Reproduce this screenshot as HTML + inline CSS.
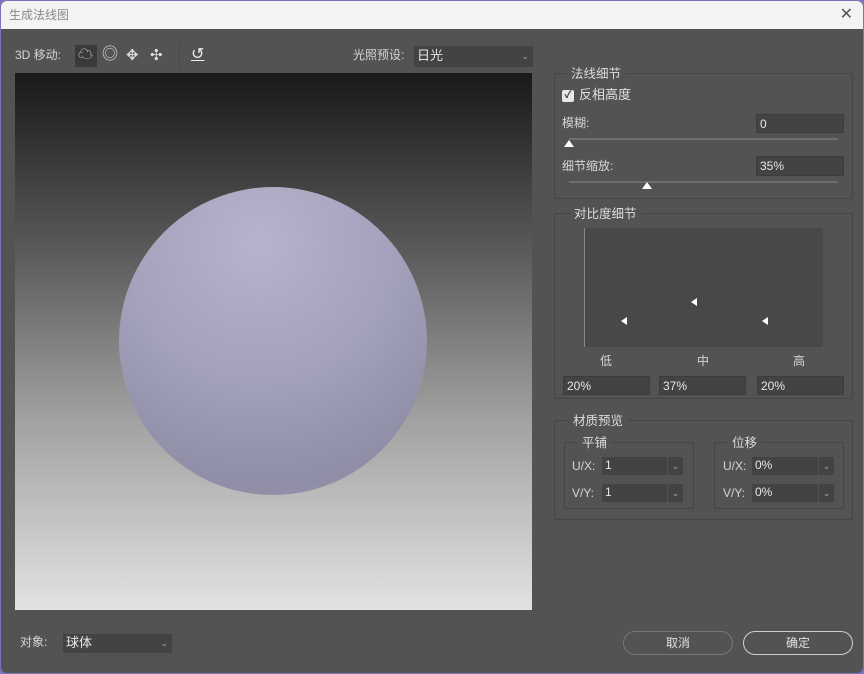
<!DOCTYPE html>
<html><head><meta charset="utf-8"><style>
*{box-sizing:border-box;margin:0;padding:0}
body{width:864px;height:674px;background:#7a74b8;font-family:"Liberation Sans","Noto Sans CJK SC",sans-serif;overflow:hidden;position:relative}
.win{position:absolute;left:1px;top:1px;width:862px;height:672px;background:#535353;border-radius:6px;overflow:hidden}
.title{position:absolute;left:0;top:0;width:862px;height:28px;background:#f3f3f3;color:#888;font-size:12px;line-height:28px;padding-left:8px}
.x{position:absolute;right:10px;top:0;font-size:16px;color:#555}
.t{position:absolute;color:#d6d6d6;font-size:12px;white-space:nowrap;line-height:14px}
.in{position:absolute;background:#434343;border:1px solid #3c3c3c;color:#e6e6e6;font-size:12px;line-height:18px;padding-left:3px}
.box{position:absolute;border:1px solid #454545;border-radius:2px}
.lg{position:absolute;background:#535353;color:#dcdcdc;font-size:12.5px;padding:0 4px;line-height:15px}
.sl{position:absolute;height:2px;background:#6e6e6e}
.th{position:absolute;width:0;height:0;border-left:5px solid transparent;border-right:5px solid transparent;border-bottom:7px solid #fff}
.dd{position:absolute;right:0;top:0;width:16px;height:100%;border-left:1px solid #535353;color:#aaa;font-size:9px;text-align:center;line-height:18px}
.btn{position:absolute;top:630px;width:110px;height:24px;border-radius:12px;color:#e0e0e0;font-size:12px;text-align:center;line-height:22px}
.tri{position:absolute;width:0;height:0;border-top:4px solid transparent;border-bottom:4px solid transparent;border-right:6px solid #fff}
</style></head><body><div class="win">
<div class="title">生成法线图<span class="x">✕</span></div>
<div class="t" style="left:14px;top:47px">3D 移动:</div>
<div style="position:absolute;left:74px;top:44px;width:22px;height:22px;background:#3a3a3a"></div>
<div class="t" style="left:77px;top:47px;font-size:15px;color:#ddd">☁</div>
<div class="t" style="left:101px;top:47px;font-size:16px;color:#ddd">◎</div>
<div class="t" style="left:125px;top:48px;font-size:15px;color:#ddd">✥</div>
<div class="t" style="left:149px;top:48px;font-size:15px;color:#ddd">✣</div>
<div style="position:absolute;left:178px;top:42px;width:1px;height:28px;background:#484848"></div>
<div class="t" style="left:190px;top:47px;font-size:16px;color:#eee;text-decoration:underline">↺</div>
<div class="t" style="left:352px;top:47px">光照预设:</div>
<div class="in" style="left:413px;top:45px;width:119px;height:21px;border:none;font-size:13px;line-height:20px">日光<span style="position:absolute;right:4px;color:#aaa;font-size:9px">⌄</span></div>
<div style="position:absolute;left:14px;top:72px;width:517px;height:537px;background:linear-gradient(#191919,#5e5e5e 35%,#a2a2a2 65%,#e2e2e2)">
<div style="position:absolute;left:104px;top:114px;width:308px;height:308px;border-radius:50%;background:radial-gradient(circle at 45% 18%,#b6b4cc,#a3a1bb 45%,#8f8ea6 80%,#9c9bb0)"></div>
</div>
<div class="box" style="left:553px;top:72px;width:299px;height:126px"></div>
<div class="lg" style="left:566px;top:66px">法线细节</div>
<div style="position:absolute;left:561px;top:89px;width:12px;height:12px;background:#e8e8e8;border-radius:2px;color:#333;font-size:10px;line-height:12px;text-align:center;font-weight:bold">✓</div>
<div class="t" style="left:578px;top:87px;font-size:13px;color:#e0e0e0">反相高度</div>
<div class="t" style="left:561px;top:115px">模糊:</div>
<div class="in" style="left:755px;top:113px;width:88px;height:19px">0</div>
<div class="sl" style="left:568px;top:137px;width:269px"></div>
<div class="th" style="left:563px;top:139px"></div>
<div class="t" style="left:561px;top:158px">细节缩放:</div>
<div class="in" style="left:755px;top:155px;width:88px;height:20px">35%</div>
<div class="sl" style="left:568px;top:180px;width:269px"></div>
<div class="th" style="left:641px;top:181px"></div>
<div class="box" style="left:553px;top:212px;width:299px;height:186px"></div>
<div class="lg" style="left:569px;top:206px">对比度细节</div>
<div style="position:absolute;left:583px;top:227px;width:239px;height:119px;background:#484848;border-left:1px solid #888"></div>
<div class="tri" style="left:620px;top:316px"></div>
<div class="tri" style="left:690px;top:297px"></div>
<div class="tri" style="left:761px;top:316px"></div>
<div class="t" style="left:599px;top:353px">低</div>
<div class="t" style="left:696px;top:353px">中</div>
<div class="t" style="left:792px;top:353px">高</div>
<div class="in" style="left:562px;top:375px;width:87px;height:19px">20%</div>
<div class="in" style="left:658px;top:375px;width:87px;height:19px">37%</div>
<div class="in" style="left:756px;top:375px;width:87px;height:19px">20%</div>
<div class="box" style="left:553px;top:419px;width:299px;height:100px"></div>
<div class="lg" style="left:568px;top:413px">材质预览</div>
<div class="box" style="left:563px;top:441px;width:130px;height:67px"></div>
<div class="lg" style="left:577px;top:435px">平铺</div>
<div class="box" style="left:713px;top:441px;width:130px;height:67px"></div>
<div class="lg" style="left:727px;top:435px">位移</div>
<div class="t" style="left:571px;top:458px">U/X:</div>
<div class="in" style="left:601px;top:456px;width:81px;height:18px;border:none;line-height:17px">1<span class="dd">⌄</span></div>
<div class="t" style="left:571px;top:485px">V/Y:</div>
<div class="in" style="left:601px;top:483px;width:81px;height:18px;border:none;line-height:17px">1<span class="dd">⌄</span></div>
<div class="t" style="left:722px;top:458px">U/X:</div>
<div class="in" style="left:751px;top:456px;width:82px;height:18px;border:none;line-height:17px">0%<span class="dd">⌄</span></div>
<div class="t" style="left:722px;top:485px">V/Y:</div>
<div class="in" style="left:751px;top:483px;width:82px;height:18px;border:none;line-height:17px">0%<span class="dd">⌄</span></div>
<div class="t" style="left:19px;top:634px">对象:</div>
<div class="in" style="left:62px;top:633px;width:109px;height:19px;border:none;font-size:13px">球体<span style="position:absolute;right:4px;color:#aaa;font-size:9px">⌄</span></div>
<div class="btn" style="left:622px;border:1px solid #777">取消</div>
<div class="btn" style="left:742px;border:1px solid #cfcfcf">确定</div>
</div></body></html>
